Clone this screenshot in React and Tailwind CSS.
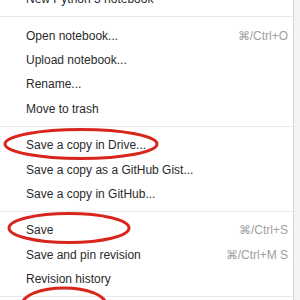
import React from 'react';

const groups = [
  [{ label: 'New Python 3 notebook' }],
  [
    { label: 'Open notebook...', shortcut: '⌘/Ctrl+O' },
    { label: 'Upload notebook...' },
    { label: 'Rename...' },
    { label: 'Move to trash' },
  ],
  [
    { label: 'Save a copy in Drive...' },
    { label: 'Save a copy as a GitHub Gist...' },
    { label: 'Save a copy in GitHub...' },
  ],
  [
    { label: 'Save', shortcut: '⌘/Ctrl+S' },
    { label: 'Save and pin revision', shortcut: '⌘/Ctrl+M S' },
    { label: 'Revision history' },
  ],
];

function MenuItem({ label, shortcut }) {
  return (
    <div className="flex h-[24.4px] items-center justify-between pl-[26px] pr-[5px] text-[12px] text-[#2a2a2a]">
      <span>{label}</span>
      {shortcut && <span className="text-[#a0a0a0]">{shortcut}</span>}
    </div>
  );
}

export default function App() {
  return (
    <div className="relative h-[300px] w-[300px] overflow-hidden bg-white font-['Liberation_Sans',Arial,sans-serif]">
      <div className="flex h-full">
        <div className="-mt-[13px] w-[293px] bg-white">
          {groups.map((items, i) => (
            <div key={i}>
              {i > 0 && <div className="mb-[6px] mt-[5px] h-px bg-[#e8e8e8]" />}
              {items.map((item) => (
                <MenuItem key={item.label} {...item} />
              ))}
            </div>
          ))}
          <div className="mt-[5px] h-px bg-[#e8e8e8]" />
        </div>
        <div className="h-full w-[7px] border-l border-[#d9d9d9] bg-[#f3f3f3]" />
      </div>

      {/* red annotation circles */}
      <svg className="pointer-events-none absolute left-0 top-0" width="300" height="300">
        <g fill="none" stroke="#d9261c" strokeWidth="3">
          <ellipse cx="81" cy="144" rx="76" ry="14.5" />
          <ellipse cx="69" cy="228" rx="60" ry="14.5" />
          <ellipse cx="64" cy="305" rx="42" ry="17" />
        </g>
      </svg>
    </div>
  );
}
